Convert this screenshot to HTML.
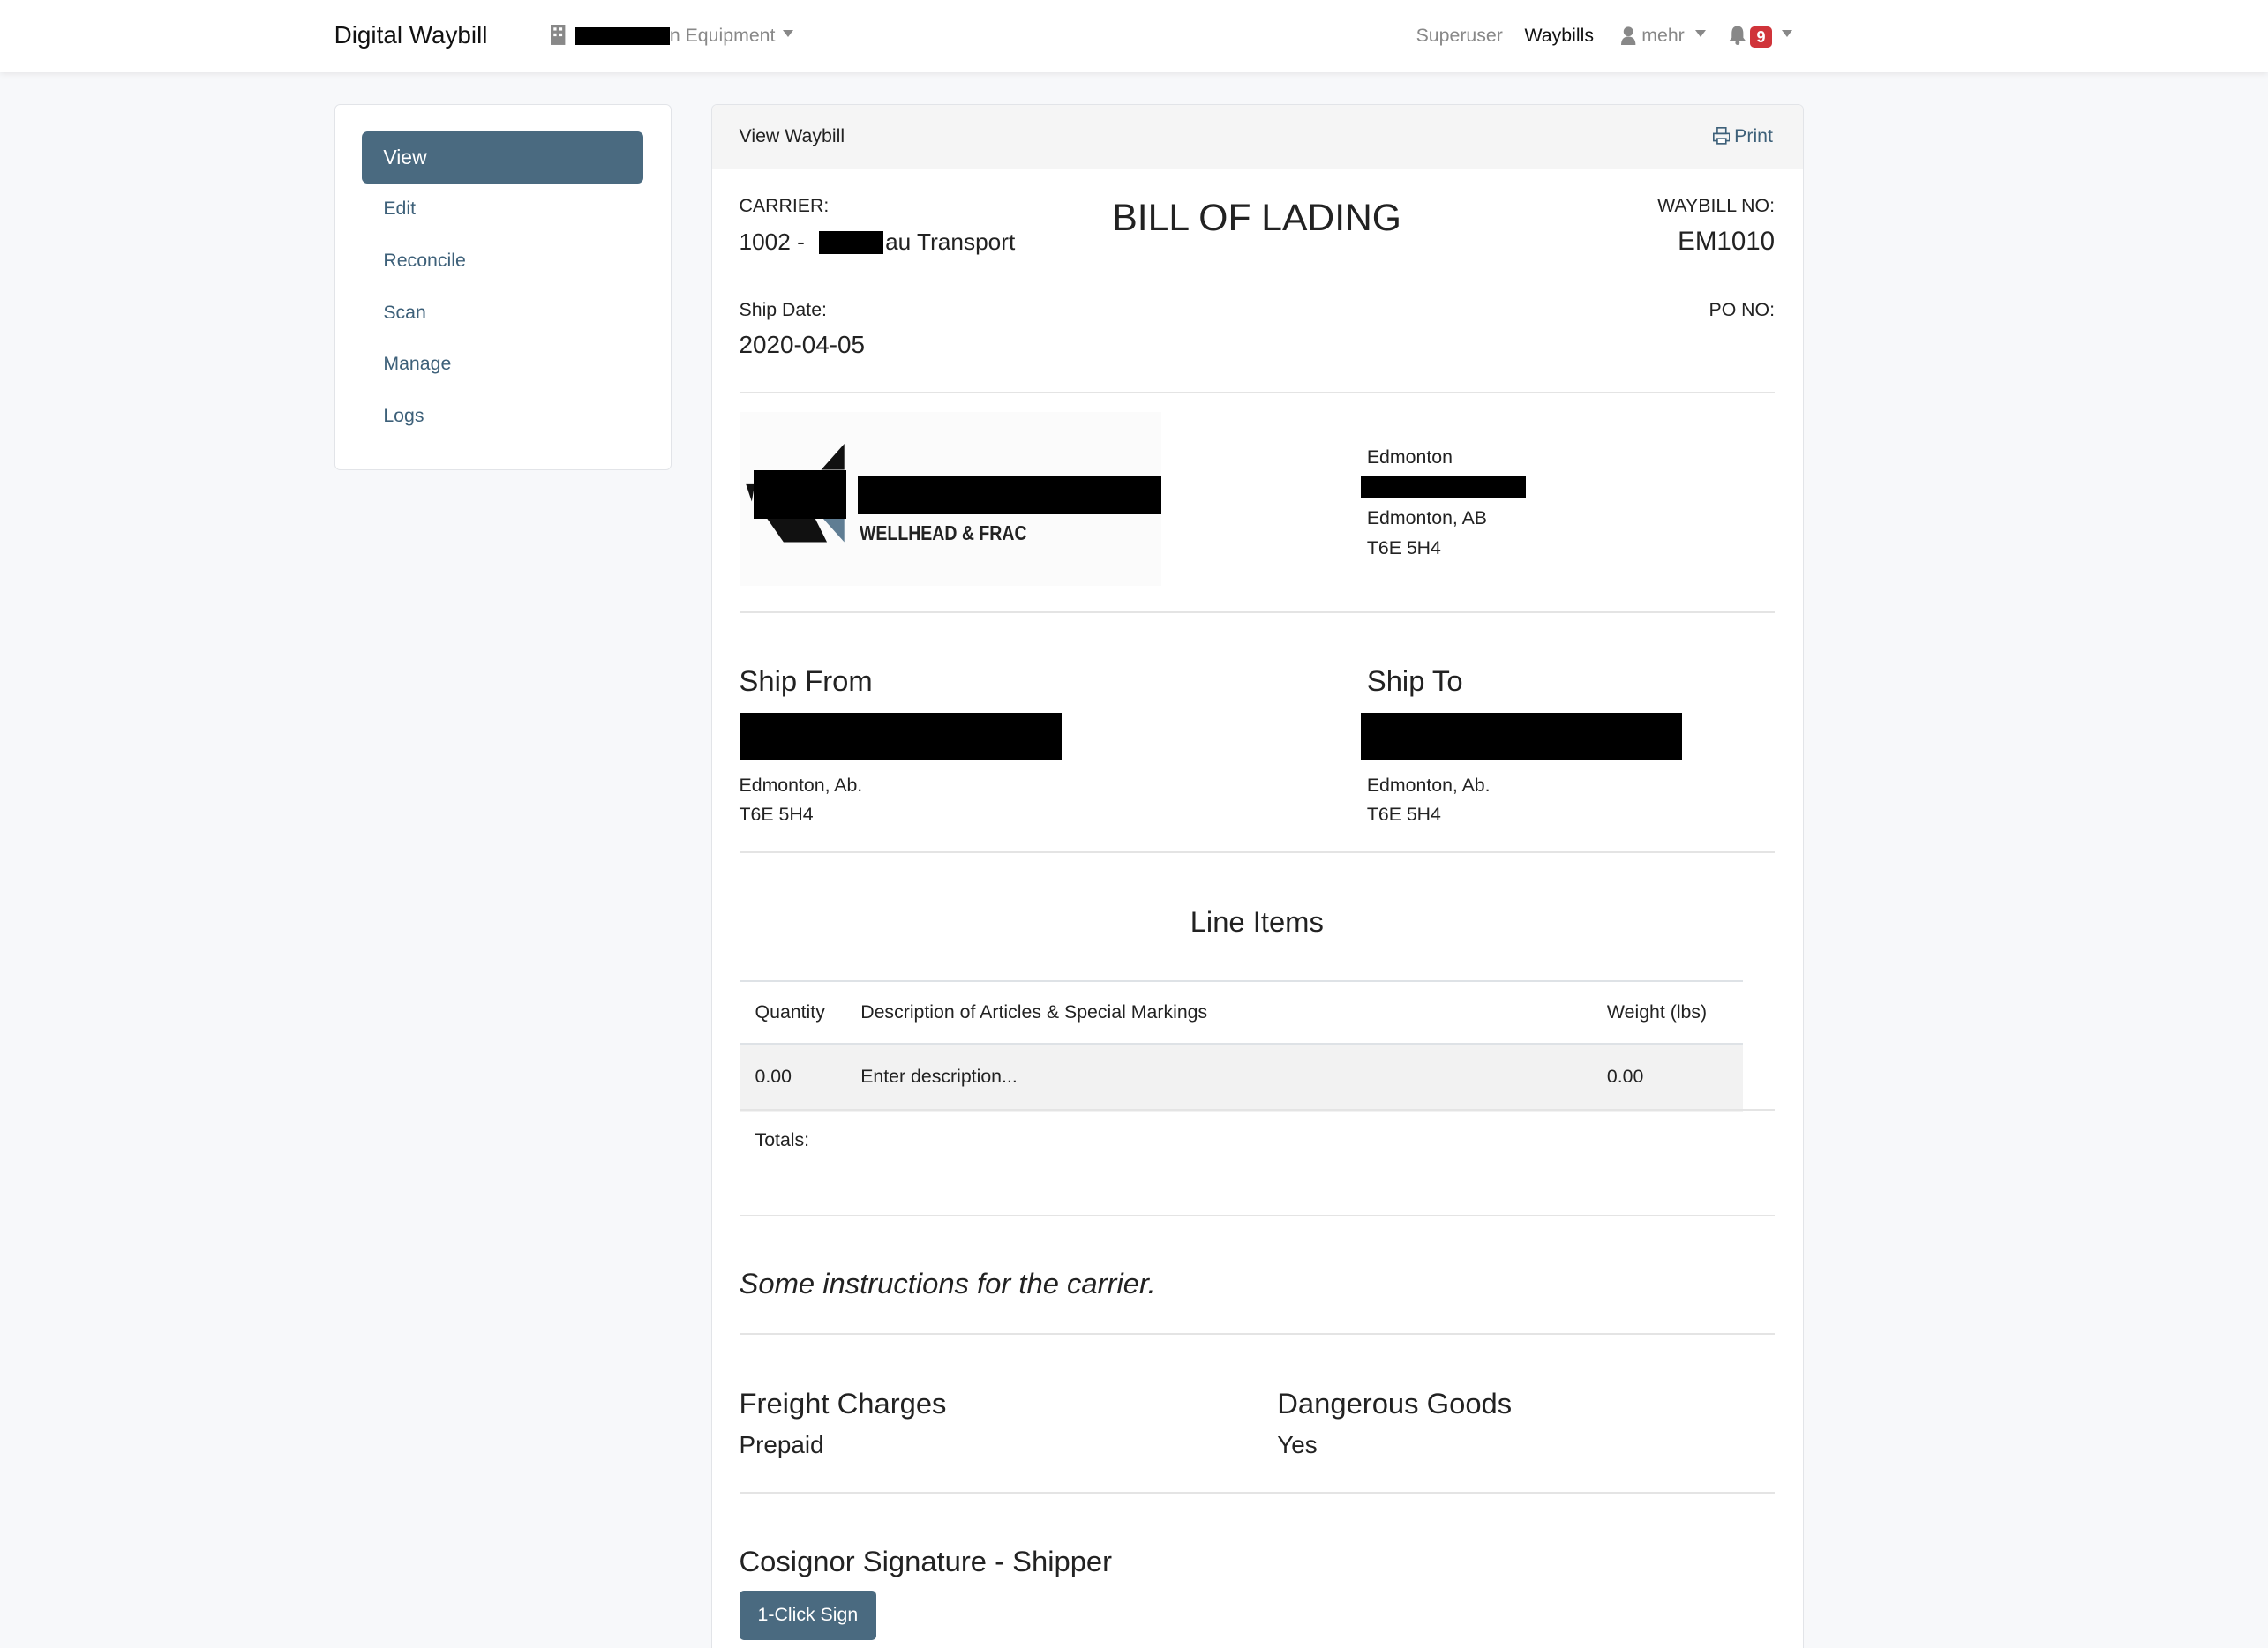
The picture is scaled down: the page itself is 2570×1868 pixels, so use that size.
<!DOCTYPE html>
<html><head><meta charset="utf-8">
<style>
html{margin:0;padding:0;width:2570px;height:1868px;overflow:hidden}
body{margin:0;padding:0}
body{width:1568px;height:1140px;overflow:hidden;zoom:1.639;background:#f7f8fa;font-family:"Liberation Sans",sans-serif;color:#222;position:relative}
.a{position:absolute;white-space:nowrap;line-height:1}
.nav{position:absolute;left:0;top:0;width:1568px;height:50px;background:#fff;box-shadow:0 1px 4px rgba(0,0,0,.08)}
.side{position:absolute;left:231px;top:72px;width:232px;height:252px;background:#fff;border:1px solid #e2e4e8;border-radius:4px}
.main{position:absolute;left:492px;top:72px;width:754px;height:1075px;background:#fff;border:1px solid #e2e4e8;border-radius:4px;overflow:hidden}
.hr{position:absolute;left:511px;width:716px;height:1px;background:#e4e4e4}
.blk{position:absolute;background:#000}
.lnk{color:#3d6079;font-size:13px}
</style></head><body>
<div class="nav"></div>
<div class="a" style="left:231px;top:16px;font-size:17px;color:#111">Digital Waybill</div>
<svg class="a" style="left:381px;top:17px" width="10" height="14"><rect x="0" y="0" width="10" height="14" fill="#888"/><rect x="2" y="2" width="2" height="2" fill="#fff"/><rect x="6" y="2" width="2" height="2" fill="#fff"/><rect x="2" y="6" width="2" height="2" fill="#fff"/><rect x="6" y="6" width="2" height="2" fill="#fff"/></svg>
<div class="blk" style="left:398px;top:19px;width:65px;height:12px"></div>
<div class="a" style="left:463px;top:18px;font-size:13px;color:#888">n Equipment</div>
<div class="a" style="left:541px;top:21px;width:0;height:0;border-left:4px solid transparent;border-right:4px solid transparent;border-top:5px solid #888"></div>
<div class="a" style="left:979px;top:18px;font-size:13px;color:#888">Superuser</div>
<div class="a" style="left:1054px;top:18px;font-size:13px;color:#111">Waybills</div>
<svg class="a" style="left:1121px;top:18px" width="10" height="13"><circle cx="5" cy="3.5" r="3.3" fill="#888"/><path d="M0 13 Q0 7 5 7 Q10 7 10 13Z" fill="#888"/></svg>
<div class="a" style="left:1135px;top:18px;font-size:13px;color:#888">mehr</div>
<div class="a" style="left:1172px;top:21px;border-left:4px solid transparent;border-right:4px solid transparent;border-top:5px solid #888"></div>
<svg class="a" style="left:1195px;top:17px" width="12" height="14"><path d="M6 1 Q2 1 2 6 L2 9 L0.5 11 L11.5 11 L10 9 L10 6 Q10 1 6 1Z" fill="#888"/><circle cx="6" cy="12.5" r="1.5" fill="#888"/></svg>
<div class="a" style="left:1210px;top:18px;width:15px;height:15px;background:#d0343a;border-radius:3px;color:#fff;font-size:11px;font-weight:bold;text-align:center;line-height:15px">9</div>
<div class="a" style="left:1232px;top:21px;border-left:4px solid transparent;border-right:4px solid transparent;border-top:5px solid #888"></div>

<div class="side"></div>
<div class="a" style="left:250px;top:91px;width:195px;height:36px;background:#4a6a80;border-radius:4px"></div>
<div class="a" style="left:265px;top:102px;font-size:14px;color:#fff">View</div>
<div class="a lnk" style="left:265px;top:138px">Edit</div>
<div class="a lnk" style="left:265px;top:174px">Reconcile</div>
<div class="a lnk" style="left:265px;top:210px">Scan</div>
<div class="a lnk" style="left:265px;top:245px">Manage</div>
<div class="a lnk" style="left:265px;top:281px">Logs</div>

<div class="main"><div style="height:44px;background:#f5f5f5;border-bottom:1px solid #ddd"></div></div>
<div class="a" style="left:511px;top:88px;font-size:13px;color:#222">View Waybill</div>
<svg class="a" style="left:1184px;top:88px" width="12" height="12"><rect x="3" y="0.5" width="6" height="4" fill="none" stroke="#3d6079"/><rect x="0.5" y="4.5" width="11" height="5" fill="none" stroke="#3d6079"/><rect x="3" y="8" width="6" height="3.5" fill="#fff" stroke="#3d6079"/></svg>
<div class="a lnk" style="left:1199px;top:88px">Print</div>

<div class="a" style="left:511px;top:136px;font-size:13px">CARRIER:</div>
<div class="a" style="left:511px;top:159px;font-size:16px">1002 - </div>
<div class="blk" style="left:566px;top:160px;width:45px;height:16px"></div>
<div class="a" style="left:612px;top:159px;font-size:16px">au Transport</div>
<div class="a" style="left:769px;top:138px;font-size:26px;color:#222">BILL OF LADING</div>
<div class="a" style="right:341px;top:136px;font-size:13px">WAYBILL NO:</div>
<div class="a" style="right:341px;top:158px;font-size:18px">EM1010</div>
<div class="a" style="left:511px;top:208px;font-size:13px">Ship Date:</div>
<div class="a" style="left:511px;top:230px;font-size:17px">2020-04-05</div>
<div class="a" style="right:341px;top:208px;font-size:13px">PO NO:</div>
<div class="hr" style="top:271px"></div>

<div class="a" style="left:511px;top:285px;width:292px;height:120px;background:#fbfbfb"></div>
<svg class="a" style="left:514px;top:307px" width="72" height="70"><polygon points="70,0 70,18 54,18" fill="#111"/><polygon points="14,48 48,48 58,68 28,68" fill="#111"/><polygon points="52,48 70,48 70,68" fill="#5f7d93"/><polygon points="2,28 8,28 6,40" fill="#111"/></svg>
<div class="blk" style="left:521px;top:325px;width:64px;height:34px"></div>
<div class="blk" style="left:593px;top:329px;width:210px;height:27px"></div>
<div class="a" style="left:594px;top:362px;font-size:14px;font-weight:bold;color:#222;transform:scaleX(.85);transform-origin:left">WELLHEAD &amp; FRAC</div>
<div class="a" style="left:945px;top:310px;font-size:13px">Edmonton</div>
<div class="blk" style="left:941px;top:329px;width:114px;height:16px"></div>
<div class="a" style="left:945px;top:352px;font-size:13px">Edmonton, AB</div>
<div class="a" style="left:945px;top:373px;font-size:13px">T6E 5H4</div>
<div class="hr" style="top:423px"></div>

<div class="a" style="left:511px;top:461px;font-size:20px">Ship From</div>
<div class="blk" style="left:511px;top:493px;width:223px;height:33px"></div>
<div class="a" style="left:511px;top:537px;font-size:13px">Edmonton, Ab.</div>
<div class="a" style="left:511px;top:557px;font-size:13px">T6E 5H4</div>
<div class="a" style="left:945px;top:461px;font-size:20px">Ship To</div>
<div class="blk" style="left:941px;top:493px;width:222px;height:33px"></div>
<div class="a" style="left:945px;top:537px;font-size:13px">Edmonton, Ab.</div>
<div class="a" style="left:945px;top:557px;font-size:13px">T6E 5H4</div>
<div class="hr" style="top:589px"></div>

<div class="a" style="left:769px;width:200px;text-align:center;top:628px;font-size:20px">Line Items</div>
<div class="a" style="left:511px;top:678px;width:694px;height:1px;background:#dee2e6"></div>
<div class="a" style="left:522px;top:694px;font-size:13px">Quantity</div>
<div class="a" style="left:595px;top:694px;font-size:13px">Description of Articles &amp; Special Markings</div>
<div class="a" style="left:1111px;top:694px;font-size:13px">Weight (lbs)</div>
<div class="a" style="left:511px;top:721px;width:694px;height:46px;background:#f2f2f2;border-top:2px solid #dee2e6"></div>
<div class="hr" style="top:767px"></div>
<div class="a" style="left:522px;top:738px;font-size:13px">0.00</div>
<div class="a" style="left:595px;top:738px;font-size:13px">Enter description...</div>
<div class="a" style="left:1111px;top:738px;font-size:13px">0.00</div>
<div class="a" style="left:522px;top:782px;font-size:13px">Totals:</div>
<div class="hr" style="top:840px"></div>

<div class="a" style="left:511px;top:878px;font-size:20px;font-style:italic">Some instructions for the carrier.</div>
<div class="hr" style="top:922px"></div>
<div class="a" style="left:511px;top:961px;font-size:20px">Freight Charges</div>
<div class="a" style="left:511px;top:991px;font-size:17px">Prepaid</div>
<div class="a" style="left:883px;top:961px;font-size:20px">Dangerous Goods</div>
<div class="a" style="left:883px;top:991px;font-size:17px">Yes</div>
<div class="hr" style="top:1032px"></div>
<div class="a" style="left:511px;top:1070px;font-size:20px">Cosignor Signature - Shipper</div>
<div class="a" style="left:511px;top:1100px;width:95px;height:34px;background:#4a6a80;border-radius:3px;color:#fff;font-size:13px;text-align:center;line-height:34px">1-Click Sign</div>
</body></html>
